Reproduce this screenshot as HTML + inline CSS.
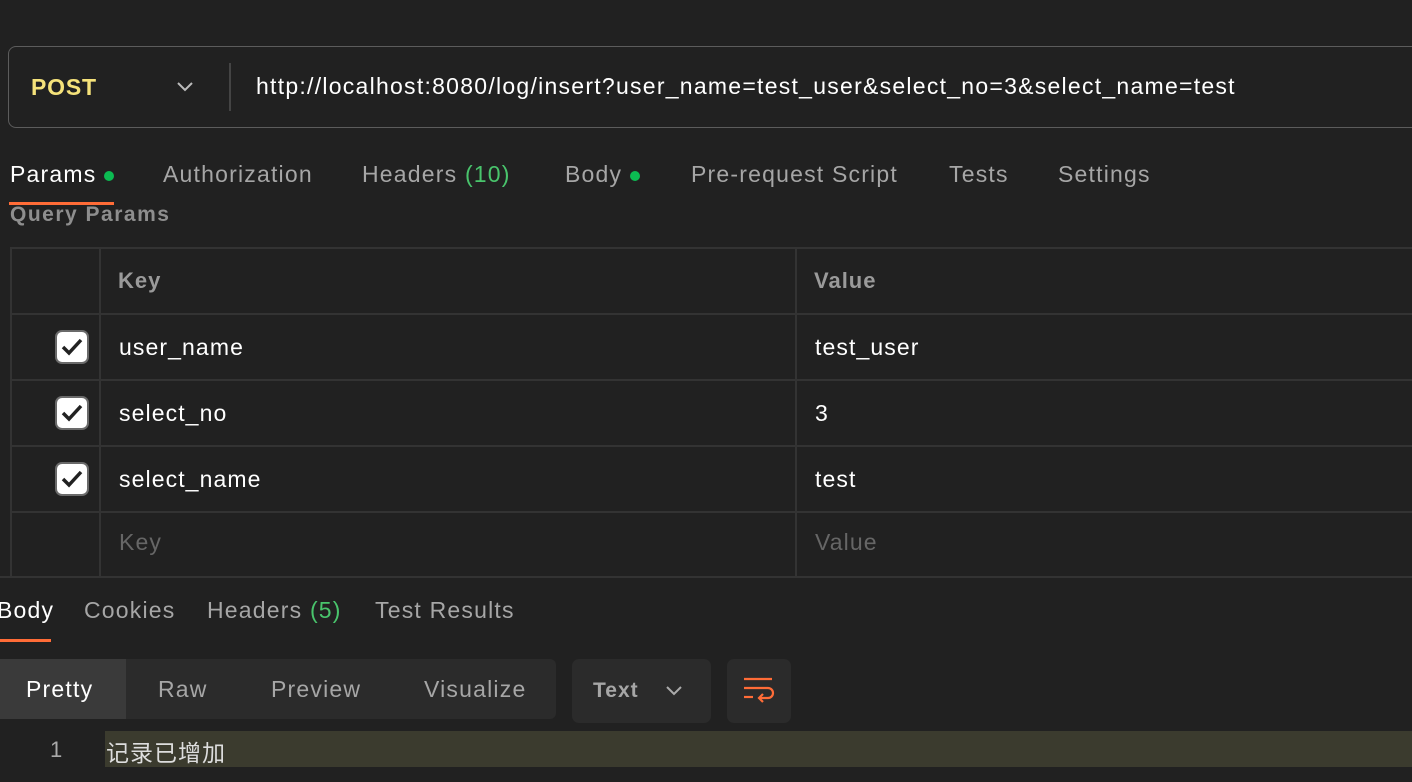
<!DOCTYPE html>
<html><head><meta charset="utf-8"><style>
body{margin:0;width:1412px;height:782px;background:#212121;overflow:hidden;position:relative;font-family:"Liberation Sans","Noto Sans CJK SC",sans-serif;color:#fff}
.a{position:absolute;white-space:nowrap}
.urlbox{position:absolute;left:8px;top:46px;width:1420px;height:82px;border:1.5px solid #5c5c5c;border-radius:8px;box-sizing:border-box}
.tab{font-size:23px;color:#a6a6a6;letter-spacing:1.2px}
.g{color:#49c46c}
.dot{display:inline-block;width:10px;height:10px;border-radius:50%;background:#0cbb52;vertical-align:middle;margin-left:8px}
.hl{position:absolute;background:#333}
.vl{position:absolute;background:#333;width:2px}
.cb{position:absolute;left:55px;width:34px;height:34px;background:#fff;border:2px solid #6a6a6a;border-radius:7px;box-sizing:border-box}
.cell{font-size:23px;letter-spacing:1.1px}
</style></head><body>
<div class="urlbox"></div>
<div class="a" style="left:31px;top:74px;font-size:23px;font-weight:bold;color:#f5e27a;letter-spacing:0.8px">POST</div>
<svg class="a" style="left:176px;top:80px" width="18" height="12"><path d="M2 3 L9 10 L16 3" stroke="#bbb" stroke-width="2" fill="none"/></svg>
<div class="a" style="left:229px;top:63px;width:2px;height:48px;background:#444"></div>
<div class="a" style="left:256px;top:73px;font-size:23px;color:#fff;letter-spacing:1.26px">http://localhost:8080/log/insert?user_name=test_user&amp;select_no=3&amp;select_name=test</div>

<div class="a tab" style="left:10px;top:161px;color:#fff">Params<span class="dot"></span></div>
<div class="a" style="left:9px;top:202px;width:105px;height:3px;background:#ff6c37"></div>
<div class="a tab" style="left:163px;top:161px">Authorization</div>
<div class="a tab" style="left:362px;top:161px">Headers <span class="g">(10)</span></div>
<div class="a tab" style="left:565px;top:161px">Body<span class="dot"></span></div>
<div class="a tab" style="left:691px;top:161px">Pre-request Script</div>
<div class="a tab" style="left:949px;top:161px">Tests</div>
<div class="a tab" style="left:1058px;top:161px">Settings</div>
<div class="a" style="left:10px;top:203px;font-size:21px;font-weight:bold;color:#8e8e8e;letter-spacing:1.5px">Query Params</div>

<div class="hl" style="left:10px;top:247px;width:1402px;height:2px"></div>
<div class="hl" style="left:10px;top:313px;width:1402px;height:2px"></div>
<div class="hl" style="left:10px;top:379px;width:1402px;height:2px"></div>
<div class="hl" style="left:10px;top:445px;width:1402px;height:2px"></div>
<div class="hl" style="left:10px;top:511px;width:1402px;height:2px"></div>
<div class="hl" style="left:0;top:576px;width:1412px;height:2px"></div>
<div class="vl" style="left:10px;top:247px;height:330px"></div>
<div class="vl" style="left:99px;top:247px;height:330px"></div>
<div class="vl" style="left:795px;top:247px;height:330px"></div>

<div class="a" style="left:118px;top:268px;font-size:22px;font-weight:bold;color:#9a9a9a;letter-spacing:1px">Key</div>
<div class="a" style="left:814px;top:268px;font-size:22px;font-weight:bold;color:#9a9a9a;letter-spacing:1px">Value</div>

<div class="cb" style="top:330px"><svg width="30" height="30"><path d="M6 15 L12 21 L24 8" stroke="#222" stroke-width="3.5" fill="none"/></svg></div>
<div class="cb" style="top:396px"><svg width="30" height="30"><path d="M6 15 L12 21 L24 8" stroke="#222" stroke-width="3.5" fill="none"/></svg></div>
<div class="cb" style="top:462px"><svg width="30" height="30"><path d="M6 15 L12 21 L24 8" stroke="#222" stroke-width="3.5" fill="none"/></svg></div>

<div class="a cell" style="left:119px;top:334px">user_name</div>
<div class="a cell" style="left:815px;top:334px">test_user</div>
<div class="a cell" style="left:119px;top:400px">select_no</div>
<div class="a cell" style="left:815px;top:400px">3</div>
<div class="a cell" style="left:119px;top:466px">select_name</div>
<div class="a cell" style="left:815px;top:466px">test</div>
<div class="a cell" style="left:119px;top:529px;color:#666">Key</div>
<div class="a cell" style="left:815px;top:529px;color:#666">Value</div>

<div class="a tab" style="left:-3px;top:597px;color:#fff">Body</div>
<div class="a" style="left:0;top:639px;width:51px;height:3px;background:#ff6c37"></div>
<div class="a tab" style="left:84px;top:597px">Cookies</div>
<div class="a tab" style="left:207px;top:597px">Headers <span class="g">(5)</span></div>
<div class="a tab" style="left:375px;top:597px">Test Results</div>

<div class="a" style="left:0;top:659px;width:556px;height:60px;background:#2b2b2b;border-radius:0 6px 6px 0"></div>
<div class="a" style="left:0;top:659px;width:126px;height:60px;background:#3a3a3a"></div>
<div class="a tab" style="left:26px;top:676px;color:#fff">Pretty</div>
<div class="a tab" style="left:158px;top:676px">Raw</div>
<div class="a tab" style="left:271px;top:676px">Preview</div>
<div class="a tab" style="left:424px;top:676px">Visualize</div>
<div class="a" style="left:572px;top:659px;width:139px;height:64px;background:#2b2b2b;border-radius:7px"></div>
<div class="a" style="left:593px;top:679px;font-size:21px;font-weight:bold;color:#a6a6a6;letter-spacing:1px">Text</div>
<svg class="a" style="left:665px;top:685px" width="18" height="12"><path d="M2 2 L9 9 L16 2" stroke="#aaa" stroke-width="2" fill="none"/></svg>
<div class="a" style="left:727px;top:659px;width:64px;height:64px;background:#2b2b2b;border-radius:7px"></div>
<svg class="a" style="left:742px;top:676px" width="34" height="32"><g stroke="#ff6c37" stroke-width="2.2" fill="none"><path d="M2 3 H30"/><path d="M2 12 H26 a5 5 0 0 1 0 10 H18"/><path d="M21 18 L17 22 L21 26"/><path d="M2 21 H11"/></g></svg>

<div class="a" style="left:105px;top:731px;width:1307px;height:36px;background:#3b3b2e"></div>
<div class="a" style="left:50px;top:737px;font-size:22px;color:#aaa">1</div>
<div class="a" style="left:106px;top:734px;font-size:23px;color:#ddd;letter-spacing:1px;font-family:'Noto Sans CJK SC',sans-serif">记录已增加</div>
</body></html>
